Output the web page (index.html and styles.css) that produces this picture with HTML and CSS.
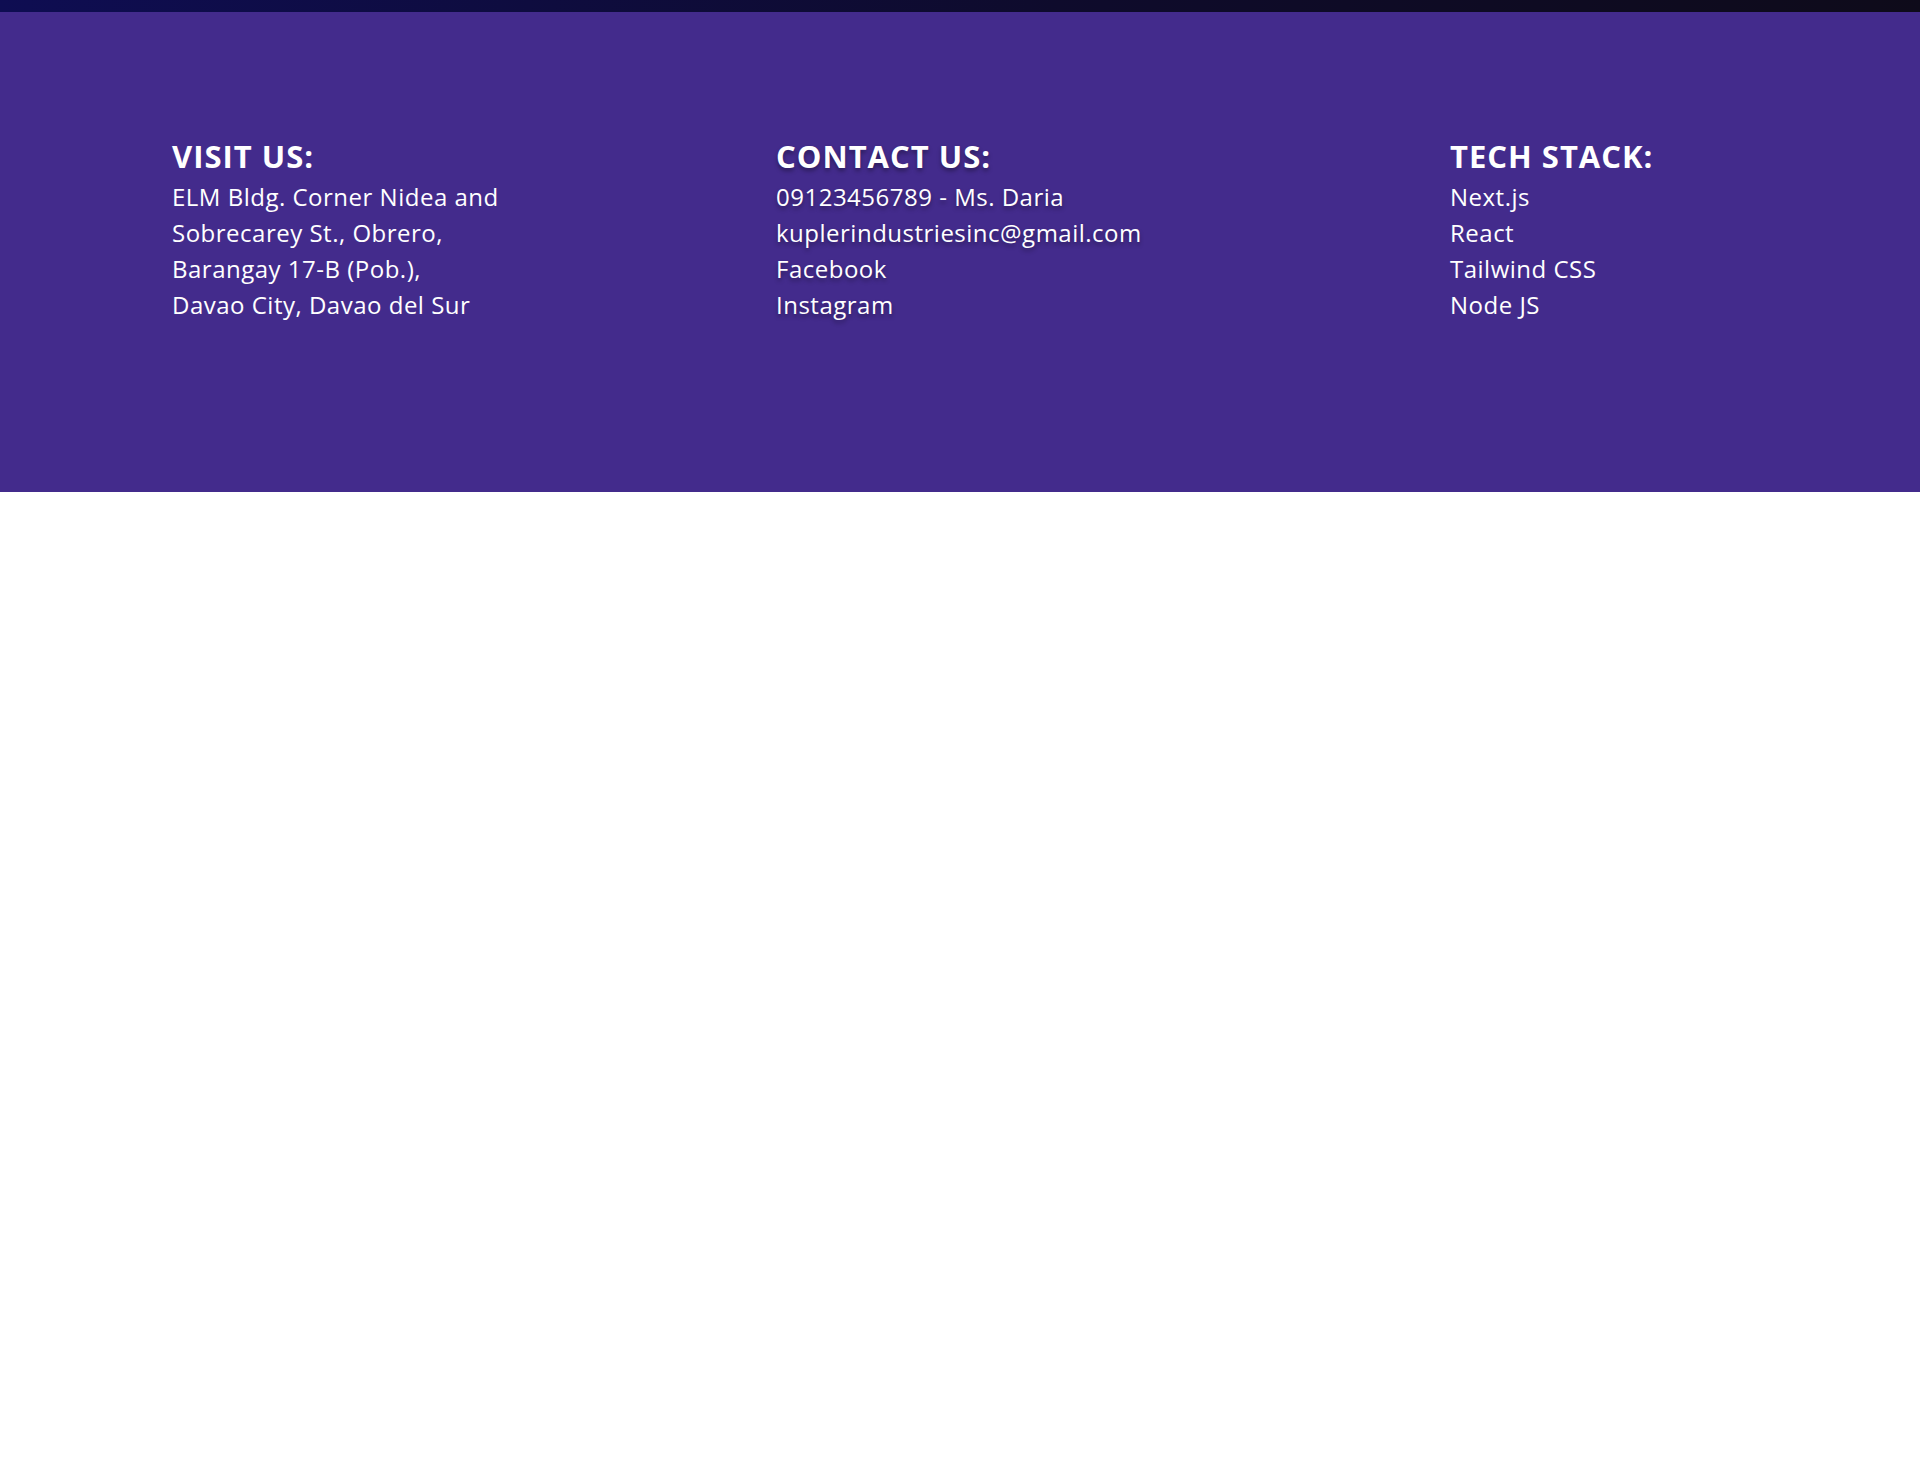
FILE: index.html
```html
<!DOCTYPE html>
<html lang="en">
<head>
<meta charset="utf-8">
<title>Footer</title>
<link rel="stylesheet" href="styles.css">
</head>
<body>
  <div class="topbar"></div>
  <footer class="footer">
    <div class="col col-visit">
      <h3 class="heading">VISIT US:</h3>
      <p class="line">ELM Bldg. Corner Nidea and</p>
      <p class="line">Sobrecarey St., Obrero,</p>
      <p class="line">Barangay 17-B (Pob.),</p>
      <p class="line">Davao City, Davao del Sur</p>
    </div>
    <div class="col col-contact">
      <h3 class="heading">CONTACT US:</h3>
      <p class="line">09123456789 - Ms. Daria</p>
      <p class="line">kuplerindustriesinc@gmail.com</p>
      <p class="line">Facebook</p>
      <p class="line">Instagram</p>
    </div>
    <div class="col col-tech">
      <h3 class="heading">TECH STACK:</h3>
      <p class="line">Next.js</p>
      <p class="line">React</p>
      <p class="line">Tailwind CSS</p>
      <p class="line">Node JS</p>
    </div>
  </footer>
</body>
</html>
```
FILE: styles.css
```css
html, body {
  margin: 0;
  padding: 0;
  background: #ffffff;
}
body {
  font-family: "Open Sans", "Noto Sans", sans-serif;
  color: #ffffff;
}
.topbar {
  height: 12px;
  background: linear-gradient(90deg, #0e0d52 0%, #0e0b2c 55%, #0e0b1a 100%);
}
.footer {
  background: #432b8c;
  height: 480px;
  box-sizing: border-box;
  padding: 124px 0 0 172px;
  display: flex;
}
.col-visit { width: 604px; }
.col-contact { width: 674px; text-shadow: 0 3px 4px rgba(0, 0, 0, 0.35); }
.heading {
  margin: 0 0 3px;
  font-size: 31px;
  line-height: 40px;
  font-weight: 700;
  letter-spacing: 1px;
}
.line {
  margin: 0;
  font-size: 24px;
  line-height: 36px;
  font-weight: 400;
  letter-spacing: 0.5px;
}
```
